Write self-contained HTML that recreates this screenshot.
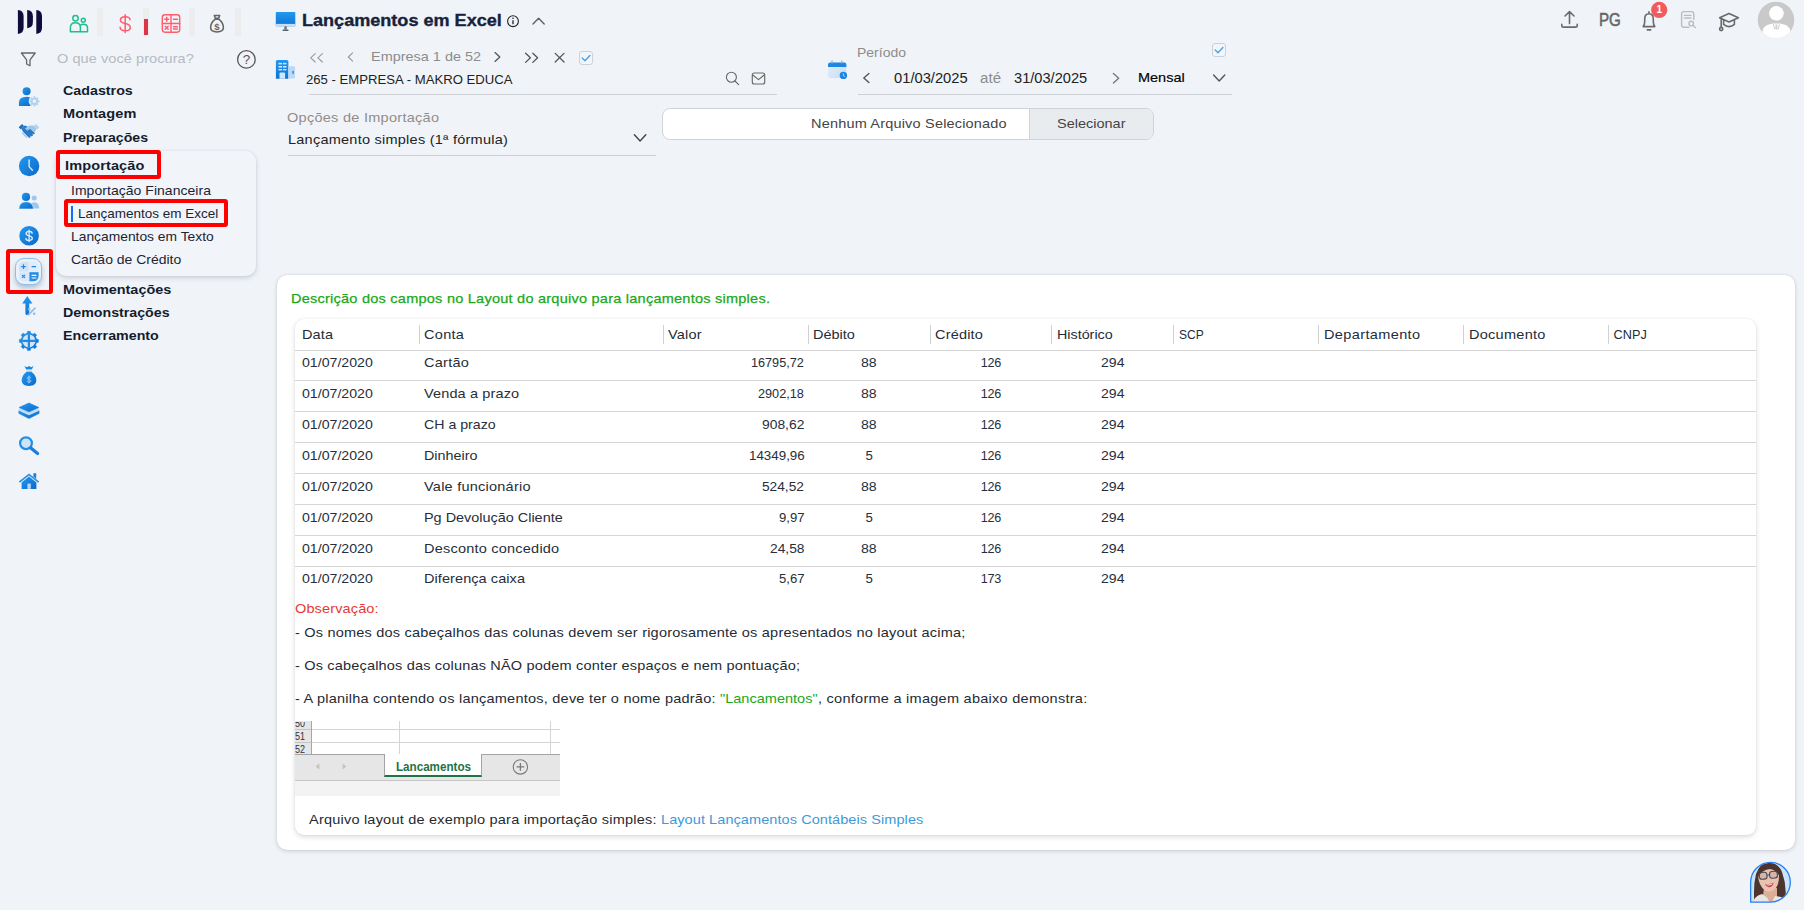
<!DOCTYPE html>
<html lang="pt-BR"><head><meta charset="utf-8"><title>Lançamentos em Excel</title>
<style>
html,body{margin:0;padding:0}
body{width:1804px;height:910px;overflow:hidden;position:relative;background:#f0f4f9;font-family:"Liberation Sans",sans-serif;}
.a{position:absolute;box-sizing:border-box}
.t{position:absolute;white-space:pre;line-height:1;font-family:"Liberation Sans",sans-serif;transform-origin:0 0}
svg{position:absolute;overflow:visible}
.gb{position:absolute;top:8px;width:6px;height:28px;background:#ededed}
.redbox{position:absolute;box-sizing:border-box;border:4px solid #ff0000;border-radius:3px}
.ul{position:absolute;height:1px;background:#cdd0d4}
.card{position:absolute;background:#fff}
.hsep{position:absolute;width:1px;top:325px;height:19px;background:#d0d0d0}
.rb{position:absolute;left:295px;width:1461px;height:1px;background:#d6d6d6}
.cb{position:absolute;box-sizing:border-box;width:14px;height:14px;border:1px solid #cdd0d4;border-radius:3px;background:#f2f5fa}

</style></head>
<body>
<svg width="0" height="0"><defs>
<linearGradient id="bg1" x1="0" y1="0" x2="1" y2="1"><stop offset="0" stop-color="#2399f0"/><stop offset="1" stop-color="#0b69c9"/></linearGradient>
<linearGradient id="bg2" x1="0" y1="0" x2="0" y2="1"><stop offset="0" stop-color="#2399f0"/><stop offset="1" stop-color="#0f72d2"/></linearGradient>
<linearGradient id="lg1" x1="0" y1="0" x2="1" y2="1"><stop offset="0" stop-color="#e6f0fb"/><stop offset="1" stop-color="#c3dcf5"/></linearGradient>
</defs></svg>

<!-- ======= top-left logo + module icons ======= -->
<svg class="a" style="left:0;top:0" width="260" height="45" viewBox="0 0 260 45">
  <path d="M17.9 10 Q23.599999999999998 10.5 23.599999999999998 16.2 V27.7 Q23.599999999999998 33.4 17.9 33.9 Z" fill="#0f0b3a"/>
  <path d="M27.2 10 Q32.9 10.5 32.9 16.2 V22.1 Q32.9 27.8 27.2 28.3 Z" fill="#0f0b3a"/>
  <path d="M36.3 10 Q42.0 10.5 42.0 16.2 V27.7 Q42.0 33.4 36.3 33.9 Z" fill="#0f0b3a"/>
  <!-- green people -->
  <g fill="none" stroke="#1dbf8a" stroke-width="1.5" stroke-linejoin="round">
    <circle cx="75.5" cy="18.2" r="2.7"/>
    <path d="M70.4 31.8 V27.6 Q70.4 22.7 75.5 22.7 Q80.4 22.7 80.4 27.6 V31.8 Z"/>
    <circle cx="83.3" cy="20.2" r="2"/>
    <path d="M80.2 25.3 Q81.4 24.3 83.3 24.3 Q87.5 24.3 87.5 28 V31.8 H80.4"/>
  </g>
  <!-- dollar -->
  <g fill="none" stroke="#ff5d6c" stroke-width="1.5" stroke-linecap="round">
    <path d="M125.2 14.8 V32.4"/>
    <path d="M130 19.8 C130 17.6 128.2 16.7 125.2 16.7 C122.1 16.7 120.4 17.9 120.4 20 C120.4 22.4 122.6 23 125.2 23.6 C128 24.2 130.3 25 130.3 27.4 C130.3 29.7 128.3 30.7 125.2 30.7 C122.1 30.7 120.1 29.7 120.1 27.3"/>
  </g>
  <!-- calc outline -->
  <g fill="none" stroke="#ff5d6c" stroke-width="1.4" stroke-linecap="round">
    <rect x="162.3" y="14.8" width="17.4" height="17.4" rx="2.6"/>
    <path d="M171 14.8 V32.2 M162.3 23.5 H179.7"/>
    <path d="M164.7 19.2 H168.7 M166.7 17.2 V21.2 M173.4 19.2 H177.4 M165.2 26.3 L168.2 29.3 M168.2 26.3 L165.2 29.3 M173.4 26.8 H177.4 M173.4 29 H177.4"/>
  </g>
  <!-- money bag outline -->
  <g fill="none" stroke="#666" stroke-width="1.55" stroke-linejoin="round" stroke-linecap="round">
    <path d="M214.3 15.4 H219.7 L218.6 18.3 H215.4 Z"/>
    <path d="M215.2 19.2 C212.6 21.4 210.6 24.6 210.6 27.6 C210.6 30.6 213 31.9 217 31.9 C221 31.9 223.4 30.6 223.4 27.6 C223.4 24.6 221.4 21.4 218.8 19.2 Z"/>
  </g>
</svg>
<span class="t" style="left:214.2px;top:21.6px;font-size:9.5px;font-weight:700;color:#666">$</span>
<div class="gb" style="left:97px"></div>
<div class="gb" style="left:143px"></div>
<div class="gb" style="left:189px"></div>
<div class="gb" style="left:235px"></div>
<div class="a" style="left:144px;top:19px;width:4px;height:16px;background:#dc3545"></div>

<!-- filter + help -->
<svg class="a" style="left:0;top:45px" width="260" height="30" viewBox="0 45 260 30">
  <path d="M21.4 53 H35.2 L30 59.8 V65.8 L26.6 64 V59.8 Z" fill="none" stroke="#666" stroke-width="1.3" stroke-linejoin="round"/>
  <circle cx="246.4" cy="59.4" r="8.8" fill="none" stroke="#555" stroke-width="1.3"/>
</svg>

<!-- ======= sidebar icons ======= -->
<svg class="a" style="left:0;top:80px" width="56" height="420" viewBox="0 80 56 420">
  <!-- user + gear -->
  <circle cx="26.6" cy="91.3" r="4" fill="url(#bg1)"/>
  <path d="M18.9 105.9 V103 Q18.9 96.8 26.6 96.8 Q31 96.8 33 99 L33 105.9 Z" fill="url(#bg1)"/>
  <circle cx="34.4" cy="101.3" r="5.7" fill="#f0f4f9"/>
  <path d="M33.62 97.68 L33.75 96.44 L35.05 96.44 L35.18 97.68 L36.41 98.19 L37.37 97.40 L38.30 98.33 L37.51 99.29 L38.02 100.52 L39.26 100.65 L39.26 101.95 L38.02 102.08 L37.51 103.31 L38.30 104.27 L37.37 105.20 L36.41 104.41 L35.18 104.92 L35.05 106.16 L33.75 106.16 L33.62 104.92 L32.39 104.41 L31.43 105.20 L30.50 104.27 L31.29 103.31 L30.78 102.08 L29.54 101.95 L29.54 100.65 L30.78 100.52 L31.29 99.29 L30.50 98.33 L31.43 97.40 L32.39 98.19 Z" fill="#b1d1ef" stroke="#b1d1ef" stroke-width="0.5" stroke-linejoin="round"/>
  <circle cx="34.4" cy="101.3" r="1.7" fill="#eef4fb"/>
  <!-- handshake -->
  <g transform="translate(29 131)">
    <path d="M-10.3 -3.7 L-7 -7 L-4.9 -4.9 L-8.2 -1.6 Z" fill="#1c6fc6"/>
    <path d="M10.3 -3.7 L7 -7 L4.9 -4.9 L8.2 -1.6 Z" fill="#b4d4f1"/>
    <path d="M7.6 -2.2 L4.3 -5.5 L0.4 -5.6 L-3.6 -2.4 L-2 -0.6 L1.4 -2.6 L5.6 1.4 Z" fill="#9cc7ee"/>
    <path d="M-7.6 -2.2 L-4.3 -5.5 L-1.2 -4.6 L-3.8 -2.4 L-2 -0.4 L1.3 -2.3 L6 2.2 L4.6 3.6 L3.4 2.6 L4 4.4 L2.6 5.6 L1.4 4.6 L1.6 6.2 L0.2 7 L-5.8 1 Z" fill="#2b7ac8"/>
    <path d="M-6.6 2 L-5.4 3.2 M-5 3.8 L-3.8 5 M-3.2 5.4 L-2.2 6.4" stroke="#9cc7ee" stroke-width="1.3" stroke-linecap="round"/>
  </g>
  <!-- clock -->
  <circle cx="29.1" cy="166" r="10.2" fill="url(#bg1)"/>
  <path d="M29.1 160 V166.6 L32.4 170.2" fill="none" stroke="#d6e9fb" stroke-width="1.4" stroke-linecap="round" stroke-linejoin="round"/>
  <!-- people -->
  <circle cx="34.2" cy="197.9" r="2.5" fill="#9cc8ee"/>
  <path d="M29.6 208.6 Q30.2 202.2 34.4 202.2 Q38.8 202.2 39.3 208.6 Z" fill="#9cc8ee"/>
  <circle cx="26" cy="196.9" r="4.1" fill="url(#bg1)"/>
  <path d="M18.8 209 Q19.3 201.7 26.1 201.7 Q32.9 201.7 33.5 209 Z" fill="url(#bg1)" stroke="#f0f4f9" stroke-width="0.6"/>
  <!-- dollar coin -->
  <circle cx="29.1" cy="235.7" r="9.8" fill="url(#bg1)"/>
  <g fill="none" stroke="#dcebfb" stroke-width="1.35" stroke-linecap="round">
    <path d="M29.1 230.2 V241.6"/>
    <path d="M32.1 233.3 C32.1 232 30.9 231.5 29.1 231.5 C27.3 231.5 26.1 232.3 26.1 233.6 C26.1 235.1 27.5 235.5 29.1 235.9 C30.8 236.3 32.3 236.8 32.3 238.3 C32.3 239.7 31 240.4 29.1 240.4 C27.2 240.4 25.9 239.7 25.9 238.4"/>
  </g>
  <!-- arrow + percent -->
  <path d="M27.3 296 L32.4 303.4 H29.2 V313.4 Q29.2 314.9 27.3 314.9 Q25.4 314.9 25.4 313.4 V303.4 H22.2 Z" fill="url(#bg2)"/>
  <g stroke="#8cc0ec" stroke-width="1.8" fill="none" stroke-linecap="round"><path d="M28.6 314.6 L35 308.2"/></g>
  <circle cx="29.2" cy="309.2" r="1.3" fill="#8cc0ec"/><circle cx="34.2" cy="313.8" r="1.3" fill="#8cc0ec"/>
  <!-- gear with cross -->
  <path d="M27.12 333.20 L27.46 331.31 L30.34 331.31 L30.68 333.20 L33.08 334.20 L34.66 333.10 L36.70 335.14 L35.60 336.72 L36.60 339.12 L38.49 339.46 L38.49 342.34 L36.60 342.68 L35.60 345.08 L36.70 346.66 L34.66 348.70 L33.08 347.60 L30.68 348.60 L30.34 350.49 L27.46 350.49 L27.12 348.60 L24.72 347.60 L23.14 348.70 L21.10 346.66 L22.20 345.08 L21.20 342.68 L19.31 342.34 L19.31 339.46 L21.20 339.12 L22.20 336.72 L21.10 335.14 L23.14 333.10 L24.72 334.20 Z" fill="url(#bg1)" stroke="#2290ea" stroke-width="0.5" stroke-linejoin="round"/>
  <circle cx="28.9" cy="340.9" r="6.5" fill="#d3e5f7"/>
  <path d="M27.8 334.4 H30 V339.8 H35.4 V342 H30 V347.4 H27.8 V342 H22.4 V339.8 H27.8 Z" fill="#2089e3"/>
  <!-- money bag -->
  <path d="M24.4 366 L26.9 367.3 L29 366 L31.1 367.3 L33.6 366 L31.8 369.4 H26.2 Z" fill="#1c86de"/>
  <path d="M26.2 369.5 H31.8 L31.7 370.4 H26.3 Z M26.3 371 H31.7 L31.8 371.9 H26.2 Z" fill="#a9cdee"/>
  <path d="M26.3 372 C23.4 374 21.7 377.2 21.7 380.2 C21.7 384 24.6 385.9 29 385.9 C33.4 385.9 36.3 384 36.3 380.2 C36.3 377.2 34.6 374 31.7 372 Z" fill="url(#bg1)"/>
  <g fill="none" stroke="#b9dbf8" stroke-width="0.8" stroke-linecap="round"><path d="M29 376 V383"/><path d="M30.7 377.9 C30.7 377.2 30 376.9 29 376.9 C28 376.9 27.3 377.4 27.3 378.1 C27.3 379 28.1 379.2 29 379.5 C30 379.8 30.8 380.1 30.8 381 C30.8 381.8 30.1 382.2 29 382.2 C27.9 382.2 27.2 381.8 27.2 381"/></g>
  <!-- layers -->
  <path d="M18.9 410.6 L29 415.1 L39.1 410.6 V413.4 L29 418.5 L18.9 413.4 Z" fill="url(#bg1)" stroke="#1a80dc" stroke-width="0.6" stroke-linejoin="round"/>
  <path d="M18.9 408.2 L29 412.6 L39.1 408.2 V410.8 L29 415.3 L18.9 410.8 Z" fill="#c3dcf4"/>
  <path d="M29 403 L38.9 407.5 L29 412 L19.1 407.5 Z" fill="url(#bg1)" stroke="#1f8ae6" stroke-width="0.7" stroke-linejoin="round"/>
  <!-- magnifier -->
  <circle cx="26" cy="443.2" r="5.9" fill="#cfe4f8" stroke="#1f8fe8" stroke-width="2.2"/>
  <path d="M30.8 448 L37.6 453.6" stroke="#1a7fdc" stroke-width="3.2" stroke-linecap="round"/>
  <!-- home -->
  <path d="M33.4 473.2 H36.2 V479 L33.4 476.6 Z" fill="#1f7fd4"/>
  <path d="M29 473.4 L39.2 481.6 L38.1 482.8 L29 475.6 L19.9 482.8 L18.8 481.6 Z" fill="#2b8fe0"/>
  <path d="M21.6 482.4 L29 476.6 L36.4 482.4 V488.9 H21.6 Z" fill="url(#bg1)"/>
  <rect x="27.4" y="483.6" width="3.4" height="5.3" fill="#b6d6f2"/>
</svg>

<!-- calc button + red box -->
<div class="a" style="left:15px;top:258px;width:27px;height:27px;border-radius:9px;background:#e9f1fb;border:1px solid #8fbfe9;box-shadow:0 3px 5px rgba(40,80,130,.32)"></div>
<svg class="a" style="left:15px;top:258px" width="27" height="27" viewBox="0 0 27 27">
  <clipPath id="cbc"><rect x="3.8" y="3.6" width="19.8" height="19.6" rx="5.2"/></clipPath>
  <g clip-path="url(#cbc)">
  <rect x="3.8" y="3.6" width="10" height="10" fill="#d0e3f6"/><rect x="14.4" y="3.6" width="10" height="10" fill="#dfecf9"/>
  <rect x="3.8" y="14.2" width="10" height="10" fill="#d9e8f8"/><rect x="14.4" y="14.2" width="10" height="10" fill="#2a8be2"/>
  </g>
  <g stroke="#1f86e2" stroke-width="1.1" fill="none"><path d="M6.2 8.6 H10.8 M8.5 6.3 V10.9 M16.6 8.6 H21 M7 16.9 L10 19.9 M10 16.9 L7 19.9"/></g>
  <path d="M16.6 17.4 H21.4 M16.6 20 H21.4" stroke="#fff" stroke-width="1.1"/>
</svg>
<div class="redbox" style="left:6.4px;top:249px;width:46.2px;height:44.8px"></div>

<!-- submenu panel -->
<div class="a" style="left:55.7px;top:150.5px;width:200.3px;height:125px;border-radius:10px;background:#f1f5fa;box-shadow:0 2px 5px rgba(50,58,72,.19),0 0 2px rgba(50,58,72,.10)"></div>
<div class="redbox" style="left:55.5px;top:150px;width:105.2px;height:28.8px"></div>
<div class="redbox" style="left:63.5px;top:199px;width:164.2px;height:27.7px"></div>
<div class="a" style="left:71px;top:206.2px;width:2.2px;height:15.6px;background:#0d6efd"></div>

<!-- ======= header ======= -->
<svg class="a" style="left:270px;top:0" width="330" height="100" viewBox="270 0 330 100">
  <!-- monitor -->
  <rect x="275.8" y="12" width="19.5" height="14.2" rx="0.8" fill="url(#bg2)"/>
  <rect x="275.8" y="23.9" width="19.5" height="2.4" fill="#c4def6"/>
  <path d="M284.5 26.3 H286.6 L287 29.6 H284.1 Z" fill="#6b7580"/>
  <rect x="282.6" y="29.6" width="5.9" height="1.3" rx="0.5" fill="#56616c"/>
  <!-- info -->
  <circle cx="513" cy="21.2" r="5.4" fill="none" stroke="#222" stroke-width="1.1"/>
  <path d="M513 20.2 V24.2" stroke="#222" stroke-width="1.3"/><circle cx="513" cy="18.3" r="0.8" fill="#222"/>
  <!-- chevron up -->
  <path d="M533 24 L538.6 18.3 L544.2 24" fill="none" stroke="#606060" stroke-width="1.4" stroke-linecap="round" stroke-linejoin="round"/>
  <!-- building -->
  <path d="M277.4 59.9 H286.8 Q288.4 59.9 288.4 61.5 V78.8 H275.9 V61.5 Q275.9 59.9 277.4 59.9 Z" fill="url(#bg2)"/>
  <path d="M288.4 66.2 H293.8 Q295 66.2 295 67.4 V77.4 Q295 78.6 293.8 78.6 H288.4 Z" fill="#bcd9f4"/>
  <rect x="292.3" y="70.8" width="1.7" height="3.2" rx="0.4" fill="#3d9be9"/>
  <g fill="#cfe5fa"><rect x="278.5" y="62.9" width="3.6" height="1.5"/><rect x="283" y="62.9" width="3.4" height="1.5"/>
  <rect x="278.5" y="66" width="3.6" height="1.6"/><rect x="283" y="66" width="3.4" height="1.6"/>
  <rect x="278.5" y="69" width="3.6" height="1.4"/><rect x="283" y="69" width="3.4" height="1.4"/></g>
  <path d="M279.5 78.8 V73.6 Q279.5 72.4 280.7 72.4 H283.9 Q285.1 72.4 285.1 73.6 V78.8 Z" fill="#d3e6f8"/>
  <!-- nav arrows -->
  <g fill="none" stroke="#999" stroke-width="1.1" stroke-linecap="round" stroke-linejoin="round">
    <path d="M315.2 53.6 L310.7 57.8 L315.2 62 M322.4 53.6 L317.9 57.8 L322.4 62"/>
    <path d="M352.6 52.8 L348.3 57 L352.6 61.2"/>
  </g>
  <g fill="none" stroke="#555" stroke-width="1.3" stroke-linecap="round" stroke-linejoin="round">
    <path d="M495 52.6 L499.8 57 L495 61.4"/>
    <path d="M525.6 53.2 L530.4 57.8 L525.6 62.4 M532.8 53.2 L537.6 57.8 L532.8 62.4"/>
    <path d="M555.2 53.4 L564 62 M564 53.4 L555.2 62"/>
  </g>
</svg>
<div class="cb" style="left:579.2px;top:51px"></div>
<svg class="a" style="left:579.2px;top:51px" width="14" height="14" viewBox="0 0 14 14"><path d="M3.2 7 L6 9.8 L10.9 4.6" fill="none" stroke="#4aa3ea" stroke-width="1.4" stroke-linecap="round" stroke-linejoin="round"/></svg>
<svg class="a" style="left:720px;top:68px" width="50" height="20" viewBox="720 68 50 20">
  <circle cx="731.4" cy="77.2" r="5" fill="none" stroke="#686868" stroke-width="1.15"/><path d="M735 81 L738.6 84.6" stroke="#686868" stroke-width="1.15" stroke-linecap="round"/>
  <rect x="752.3" y="73" width="12.4" height="11" rx="2" fill="none" stroke="#686868" stroke-width="1.15"/><path d="M752.8 75 L758.5 79.6 L764.2 75" fill="none" stroke="#686868" stroke-width="1.15" stroke-linejoin="round"/>
</svg>
<div class="ul" style="left:309px;top:94px;width:468px"></div>
<!-- dropdown -->
<svg class="a" style="left:630px;top:130px" width="20" height="16" viewBox="630 130 20 16"><path d="M634.4 134.8 L640.1 141 L645.8 134.8" fill="none" stroke="#444" stroke-width="1.4" stroke-linecap="round" stroke-linejoin="round"/></svg>
<div class="ul" style="left:288px;top:155px;width:368px"></div>
<!-- file input -->
<div class="a" style="left:662px;top:108px;width:492px;height:32px;border:1px solid #cfd4da;border-radius:8px;background:#fff;overflow:hidden">
  <div class="a" style="left:366px;top:0;width:125px;height:30px;background:#e9ecef;border-left:1px solid #cfd4da"></div>
</div>
<!-- period -->
<svg class="a" style="left:820px;top:40px" width="420" height="50" viewBox="820 40 420 50">
  <rect x="828" y="62.4" width="18.4" height="15.6" rx="2.4" fill="url(#lg1)"/>
  <path d="M830.4 62.4 H844 Q846.4 62.4 846.4 64.8 V67 H828 V64.8 Q828 62.4 830.4 62.4 Z" fill="#1f86e2"/>
  <rect x="831.4" y="60.3" width="1.3" height="3.2" rx="0.6" fill="#7db7ea"/><rect x="841.2" y="60.3" width="1.3" height="3.2" rx="0.6" fill="#7db7ea"/>
  <circle cx="843.4" cy="75.4" r="3.7" fill="#1c86e2"/>
  <path d="M843.4 73.4 V75.6 L844.8 76.6" stroke="#dcecfb" stroke-width="0.8" fill="none"/>
  <g fill="none" stroke="#555" stroke-width="1.4" stroke-linecap="round" stroke-linejoin="round">
    <path d="M868.9 73.6 L863.8 78.1 L868.9 82.6"/>
    <path d="M1113.4 73.5 L1118.7 78.2 L1113.4 82.9" stroke="#787878"/>
    <path d="M1213.6 75 L1219.2 81 L1224.8 75"/>
  </g>
</svg>
<div class="ul" style="left:858px;top:94px;width:374px"></div>
<div class="cb" style="left:1212px;top:43px"></div>
<svg class="a" style="left:1212px;top:43px" width="14" height="14" viewBox="0 0 14 14"><path d="M3.2 7 L6 9.8 L10.9 4.6" fill="none" stroke="#4aa3ea" stroke-width="1.4" stroke-linecap="round" stroke-linejoin="round"/></svg>

<!-- top-right icons -->
<svg class="a" style="left:1550px;top:0" width="254" height="45" viewBox="1550 0 254 45">
  <g fill="none" stroke="#6a6a6a" stroke-width="1.6" stroke-linecap="round" stroke-linejoin="round">
    <path d="M1569.5 12 V23.6 M1565 16 L1569.5 11.7 L1574 16 M1561.8 24.4 V25.4 Q1561.8 27.1 1563.5 27.1 H1575.5 Q1577.2 27.1 1577.2 25.4 V24.4"/>
    <path d="M1643.2 26.6 H1654.8 Q1653.3 24.6 1653.3 21.6 V19.2 Q1653.3 13.8 1649 13.8 Q1644.7 13.8 1644.7 19.2 V21.6 Q1644.7 24.6 1643.2 26.6 Z M1649 13.6 V11.8 M1647.3 29.9 H1650.7"/>
    <path d="M1729 13.6 L1738.4 17.8 L1729 22 L1719.6 17.8 Z M1723.6 20 V24.4 Q1726 26.6 1729 26.6 Q1732 26.6 1734.4 24.4 V20 M1721.2 18.6 V27.4"/>
    <circle cx="1721.2" cy="29" r="1.6"/>
  </g>
  <g fill="none" stroke="#bcbcbc" stroke-width="1.4" stroke-linecap="round" stroke-linejoin="round">
    <path d="M1689 27.3 H1683.8 Q1681.6 27.3 1681.6 25.1 V13.8 Q1681.6 11.6 1683.8 11.6 H1691.6 Q1693.8 11.6 1693.8 13.8 V19.4"/>
    <path d="M1684.4 15.4 H1691 M1684.4 18 H1691"/>
    <circle cx="1691.2" cy="23.6" r="2.3"/><path d="M1693 25.4 L1695.4 27.6"/>
  </g>
  <circle cx="1659.2" cy="9.9" r="8.1" fill="#f15b5b"/>
  <circle cx="1776" cy="20" r="18.3" fill="#c9c9c9"/>
  <clipPath id="avc"><circle cx="1776" cy="20" r="18.3"/></clipPath>
  <g clip-path="url(#avc)" fill="#fff"><circle cx="1776.4" cy="13.3" r="7.3"/><path d="M1762.6 40 V31.4 Q1762.6 25.6 1770.6 24 L1773.2 23.6 H1779.6 L1782.2 24 Q1790.2 25.6 1790.2 31.4 V40 Z"/><path d="M1773.4 24 L1774.6 29.4 M1779.4 24 L1778.2 29.4" stroke="#c9c9c9" stroke-width="0.9" fill="none"/><path d="M1775.6 24.2 H1777.2 L1777.6 28.6 L1776.4 30 L1775.2 28.6 Z" fill="#d4d4d4"/></g>
</svg>

<!-- ======= main card ======= -->
<div class="card" style="left:277px;top:275px;width:1518px;height:575px;border-radius:10px;box-shadow:0 1px 4px rgba(40,45,55,.20),0 0 1px rgba(40,45,55,.14)"></div>
<div class="card" style="left:295px;top:319px;width:1461px;height:516px;border-radius:9px;box-shadow:0 2px 5px rgba(40,45,55,.17),0 0 2px rgba(40,45,55,.09)"></div>
<div class="hsep" style="left:419px"></div><div class="hsep" style="left:663px"></div><div class="hsep" style="left:808px"></div>
<div class="hsep" style="left:930px"></div><div class="hsep" style="left:1051px"></div><div class="hsep" style="left:1173px"></div>
<div class="hsep" style="left:1318px"></div><div class="hsep" style="left:1463px"></div><div class="hsep" style="left:1608px"></div>
<div class="rb" style="top:350px"></div><div class="rb" style="top:380px"></div><div class="rb" style="top:411px"></div><div class="rb" style="top:442px"></div>
<div class="rb" style="top:473px"></div><div class="rb" style="top:504px"></div><div class="rb" style="top:535px"></div><div class="rb" style="top:566px"></div>

<!-- excel tab image -->
<div class="a" style="left:295px;top:721px;width:265px;height:75px;background:#fff;overflow:hidden">
  <div class="a" style="left:0;top:0;width:17px;height:33.5px;background:#e6e6e6;border-right:1px solid #a6a6a6"></div>
  <div class="a" style="left:17px;top:7.5px;width:248px;height:1px;background:#d4d4d4"></div>
  <div class="a" style="left:17px;top:20.8px;width:248px;height:1px;background:#d4d4d4"></div>
  <div class="a" style="left:0;top:7.5px;width:16px;height:1px;background:#c4c4c4"></div>
  <div class="a" style="left:0;top:20.8px;width:16px;height:1px;background:#c4c4c4"></div>
  <div class="a" style="left:104px;top:0;width:1px;height:33px;background:#d4d4d4"></div>
  <div class="a" style="left:255px;top:0;width:1px;height:33px;background:#d4d4d4"></div>
  <div class="a" style="left:0;top:33px;width:265px;height:27px;background:#e6e6e6;border-top:1px solid #a3a3a3;border-bottom:1px solid #c6c6c6"></div>
  <div class="a" style="left:89.4px;top:33px;width:97.4px;height:23px;background:#fff;border-left:1px solid #a3a3a3;border-right:1px solid #a3a3a3;border-bottom:2px solid #217346"></div>
  <div class="a" style="left:0;top:60px;width:265px;height:15px;background:#f3f3f3"></div>
  <svg class="a" style="left:0;top:0" width="265" height="75" viewBox="0 0 265 75">
    <path d="M24.4 42.6 V48.4 L20.6 45.5 Z M47.6 42.6 V48.4 L51.4 45.5 Z" fill="#c3c3c3"/>
    <circle cx="225.4" cy="45.9" r="7.2" fill="none" stroke="#7a7a7a" stroke-width="1.1"/><path d="M221.6 45.9 H229.2 M225.4 42.1 V49.7" stroke="#7a7a7a" stroke-width="1.3"/>
  </svg>
</div>

<!-- bottom-right assistant avatar -->
<svg class="a" style="left:1745px;top:858px" width="50" height="50" viewBox="1745 858 50 50">
  <clipPath id="asc"><path d="M1750.65 902.1 V882.3 A19.85 19.85 0 1 1 1770.5 902.1 Z"/></clipPath>
  <g clip-path="url(#asc)">
    <rect x="1745" y="858" width="50" height="50" fill="#c9e5fb"/>
    <path d="M1754.4 903 Q1753 886 1756 874 Q1760 862.6 1769 863 Q1778 862.6 1782 872 Q1786.4 884 1785.6 896 Q1784 901 1778 903 Z" fill="#4d342e"/>
    <path d="M1764 888 H1777 V903 H1762 Z" fill="#dcae97"/>
    <path d="M1758 875 Q1758 866 1768.4 865.6 Q1778.4 866 1779 876 Q1779 886 1774 890 Q1769.4 893 1765 890.4 Q1758.6 886 1758 875 Z" fill="#e8c3b0"/>
    <path d="M1757.4 878 Q1757.6 868 1762 865.4 Q1768 863.6 1774 865.4 Q1779.4 868 1779.6 876 Q1776 870 1770 869 Q1762 869.4 1757.4 878 Z" fill="#4d342e"/>
    <path d="M1753 903 Q1754 896 1762 894 L1767 897.6 L1770 903 Z M1771.4 903 L1775 896 L1781 897 Q1786 899 1787 903 Z" fill="#e9e5e3"/>
    <path d="M1765 884 Q1769.6 884.6 1773.6 882.8 Q1772.6 887.4 1768.8 887.2 Q1766 886.8 1765 884 Z" fill="#c8414e"/>
    <path d="M1766 884.3 Q1769.6 884.8 1772.8 883.5 Q1771.6 885.6 1768.9 885.6 Q1767 885.4 1766 884.3 Z" fill="#f6eeee"/>
    <g fill="rgba(120,120,135,.18)" stroke="#4a4a56" stroke-width="1.1"><rect x="1759.4" y="872.4" width="7.6" height="6.8" rx="2.6" transform="rotate(-4 1763 876)"/><rect x="1769.6" y="871.4" width="7.8" height="6.8" rx="2.6" transform="rotate(-4 1773 875)"/></g>
    <path d="M1767 875.2 L1769.6 874.8" stroke="#4a4a56" stroke-width="1"/>
  </g>
  <path d="M1750.65 902.1 V882.3 A19.85 19.85 0 1 1 1770.5 902.1 Z" fill="none" stroke="#2a7ff0" stroke-width="1.3"/>
</svg>

<div id="texts">
<span class="t" style="left:56.90px;top:52.20px;font-size:13.5px;color:#b4bac1;letter-spacing:0.065px;transform:scaleX(1.0750);">O que você procura?</span>
<span class="t" style="left:62.70px;top:84.10px;font-size:13.5px;color:#141c2e;font-weight:700;transform:scaleX(1.0571);">Cadastros</span>
<span class="t" style="left:62.70px;top:107.10px;font-size:13.5px;color:#141c2e;font-weight:700;letter-spacing:0.098px;transform:scaleX(1.0750);">Montagem</span>
<span class="t" style="left:62.70px;top:130.90px;font-size:13.5px;color:#141c2e;font-weight:700;transform:scaleX(1.0498);">Preparações</span>
<span class="t" style="left:64.50px;top:158.90px;font-size:13.5px;color:#141c2e;font-weight:700;letter-spacing:0.120px;transform:scaleX(1.0750);">Importação</span>
<span class="t" style="left:70.70px;top:183.90px;font-size:13px;color:#1c2434;letter-spacing:0.044px;transform:scaleX(1.0750);">Importação Financeira</span>
<span class="t" style="left:78.20px;top:206.80px;font-size:13px;color:#1c2434;transform:scaleX(1.0376);">Lançamentos em Excel</span>
<span class="t" style="left:70.70px;top:230.00px;font-size:13px;color:#1c2434;transform:scaleX(1.0636);">Lançamentos em Texto</span>
<span class="t" style="left:70.70px;top:252.90px;font-size:13px;color:#1c2434;transform:scaleX(1.0738);">Cartão de Crédito</span>
<span class="t" style="left:62.70px;top:282.60px;font-size:13.5px;color:#141c2e;font-weight:700;transform:scaleX(1.0691);">Movimentações</span>
<span class="t" style="left:62.70px;top:305.50px;font-size:13.5px;color:#141c2e;font-weight:700;transform:scaleX(1.0524);">Demonstrações</span>
<span class="t" style="left:62.70px;top:328.50px;font-size:13.5px;color:#141c2e;font-weight:700;transform:scaleX(1.0551);">Encerramento</span>
<span class="t" style="left:301.90px;top:12.30px;font-size:17px;color:#17223a;font-weight:700;transform:scaleX(1.0626);-webkit-text-stroke:0.35px #17223a;">Lançamentos em Excel</span>
<span class="t" style="left:370.60px;top:49.70px;font-size:13.5px;color:#8c8c8c;transform:scaleX(1.0709);">Empresa 1 de 52</span>
<span class="t" style="left:306.30px;top:72.70px;font-size:13.01px;color:#222;transform:scaleX(1.0100);">265 - EMPRESA - MAKRO EDUCA</span>
<span class="t" style="left:287.10px;top:111.20px;font-size:13.5px;color:#908c8a;letter-spacing:0.254px;transform:scaleX(1.0750);">Opções de Importação</span>
<span class="t" style="left:287.50px;top:132.90px;font-size:13.5px;color:#222;letter-spacing:0.221px;transform:scaleX(1.0750);">Lançamento simples (1ª fórmula)</span>
<span class="t" style="left:856.90px;top:45.60px;font-size:13.5px;color:#8c8c8c;transform:scaleX(1.0360);">Período</span>
<span class="t" style="left:894.30px;top:70.90px;font-size:14px;color:#222;transform:scaleX(1.0517);">01/03/2025</span>
<span class="t" style="left:980.10px;top:70.90px;font-size:14px;color:#8c8c8c;letter-spacing:0.080px;transform:scaleX(1.0750);">até</span>
<span class="t" style="left:1013.70px;top:70.90px;font-size:14px;color:#222;transform:scaleX(1.0445);">31/03/2025</span>
<span class="t" style="left:1138.40px;top:71.40px;font-size:13.5px;color:#000;transform:scaleX(1.0728);-webkit-text-stroke:0.15px #000;">Mensal</span>
<span class="t" style="left:810.50px;top:116.80px;font-size:13.5px;color:#444;letter-spacing:0.167px;transform:scaleX(1.0750);">Nenhum Arquivo Selecionado</span>
<span class="t" style="left:1057.40px;top:116.80px;font-size:13.5px;color:#444;transform:scaleX(1.0737);">Selecionar</span>
<span class="t" style="left:1599.00px;top:11.30px;font-size:18px;color:#666;transform-origin:0 0;transform:scaleX(0.84);-webkit-text-stroke:0.55px #666;">PG</span>
<span class="t" style="left:1656.42px;top:5.40px;font-size:10px;color:#fff;font-weight:700;">1</span>
<span class="t" style="left:242.64px;top:53.00px;font-size:13.5px;color:#555;">?</span>
<span class="t" style="left:291.30px;top:291.90px;font-size:13.5px;color:#19a819;letter-spacing:0.224px;transform:scaleX(1.0750);-webkit-text-stroke:0.25px #19a819;">Descrição dos campos no Layout do arquivo para lançamentos simples.</span>
<span class="t" style="left:301.60px;top:327.90px;font-size:13.5px;color:#232c39;letter-spacing:0.133px;transform:scaleX(1.0750);">Data</span>
<span class="t" style="left:424.30px;top:327.90px;font-size:13.5px;color:#232c39;letter-spacing:0.271px;transform:scaleX(1.0750);">Conta</span>
<span class="t" style="left:668.40px;top:327.90px;font-size:13.5px;color:#232c39;letter-spacing:0.162px;transform:scaleX(1.0750);">Valor</span>
<span class="t" style="left:813.00px;top:327.90px;font-size:13.5px;color:#232c39;transform:scaleX(1.0735);">Débito</span>
<span class="t" style="left:934.70px;top:327.90px;font-size:13.5px;color:#232c39;letter-spacing:0.171px;transform:scaleX(1.0750);">Crédito</span>
<span class="t" style="left:1056.90px;top:327.90px;font-size:13.5px;color:#232c39;transform:scaleX(1.0606);">Histórico</span>
<span class="t" style="left:1178.70px;top:328.90px;font-size:12.3px;color:#232c39;transform:scaleX(0.9764);">SCP</span>
<span class="t" style="left:1323.70px;top:327.90px;font-size:13.5px;color:#232c39;letter-spacing:0.348px;transform:scaleX(1.0750);">Departamento</span>
<span class="t" style="left:1468.70px;top:327.90px;font-size:13.5px;color:#232c39;letter-spacing:0.253px;transform:scaleX(1.0750);">Documento</span>
<span class="t" style="left:1613.60px;top:328.90px;font-size:12.7px;color:#232c39;">CNPJ</span>
<span class="t" style="left:301.70px;top:355.90px;font-size:13.5px;color:#262e3a;transform:scaleX(1.0477);">01/07/2020</span>
<span class="t" style="left:423.70px;top:355.90px;font-size:13.5px;color:#262e3a;letter-spacing:0.247px;transform:scaleX(1.0750);">Cartão</span>
<span class="t" style="left:751.40px;top:355.90px;font-size:13.2px;color:#262e3a;transform:scaleX(0.9597);">16795,72</span>
<span class="t" style="left:861.40px;top:355.90px;font-size:13.2px;color:#262e3a;transform:scaleX(1.0701);">88</span>
<span class="t" style="left:980.79px;top:356.90px;font-size:12.6px;color:#262e3a;letter-spacing:-0.300px;">126</span>
<span class="t" style="left:1101.10px;top:355.90px;font-size:13.2px;color:#262e3a;transform:scaleX(1.0674);">294</span>
<span class="t" style="left:301.70px;top:386.80px;font-size:13.5px;color:#262e3a;transform:scaleX(1.0477);">01/07/2020</span>
<span class="t" style="left:423.70px;top:386.80px;font-size:13.5px;color:#262e3a;letter-spacing:0.123px;transform:scaleX(1.0750);">Venda a prazo</span>
<span class="t" style="left:758.30px;top:386.80px;font-size:13.2px;color:#262e3a;transform:scaleX(0.9628);">2902,18</span>
<span class="t" style="left:861.40px;top:386.80px;font-size:13.2px;color:#262e3a;transform:scaleX(1.0701);">88</span>
<span class="t" style="left:980.79px;top:387.80px;font-size:12.6px;color:#262e3a;letter-spacing:-0.300px;">126</span>
<span class="t" style="left:1101.10px;top:386.80px;font-size:13.2px;color:#262e3a;transform:scaleX(1.0674);">294</span>
<span class="t" style="left:301.70px;top:417.60px;font-size:13.5px;color:#262e3a;transform:scaleX(1.0477);">01/07/2020</span>
<span class="t" style="left:423.70px;top:417.60px;font-size:13.5px;color:#262e3a;transform:scaleX(1.0486);">CH a prazo</span>
<span class="t" style="left:761.80px;top:417.60px;font-size:13.2px;color:#262e3a;transform:scaleX(1.0510);">908,62</span>
<span class="t" style="left:861.40px;top:417.60px;font-size:13.2px;color:#262e3a;transform:scaleX(1.0701);">88</span>
<span class="t" style="left:980.79px;top:418.60px;font-size:12.6px;color:#262e3a;letter-spacing:-0.300px;">126</span>
<span class="t" style="left:1101.10px;top:417.60px;font-size:13.2px;color:#262e3a;transform:scaleX(1.0674);">294</span>
<span class="t" style="left:301.70px;top:448.80px;font-size:13.5px;color:#262e3a;transform:scaleX(1.0477);">01/07/2020</span>
<span class="t" style="left:423.70px;top:448.80px;font-size:13.5px;color:#262e3a;transform:scaleX(1.0620);">Dinheiro</span>
<span class="t" style="left:748.50px;top:448.80px;font-size:13.2px;color:#262e3a;transform:scaleX(1.0124);">14349,96</span>
<span class="t" style="left:865.58px;top:448.80px;font-size:13.2px;color:#262e3a;">5</span>
<span class="t" style="left:980.79px;top:449.80px;font-size:12.6px;color:#262e3a;letter-spacing:-0.300px;">126</span>
<span class="t" style="left:1101.10px;top:448.80px;font-size:13.2px;color:#262e3a;transform:scaleX(1.0674);">294</span>
<span class="t" style="left:301.70px;top:480.00px;font-size:13.5px;color:#262e3a;transform:scaleX(1.0477);">01/07/2020</span>
<span class="t" style="left:423.70px;top:480.00px;font-size:13.5px;color:#262e3a;letter-spacing:0.217px;transform:scaleX(1.0750);">Vale funcionário</span>
<span class="t" style="left:762.30px;top:480.00px;font-size:13.2px;color:#262e3a;transform:scaleX(1.0386);">524,52</span>
<span class="t" style="left:861.40px;top:480.00px;font-size:13.2px;color:#262e3a;transform:scaleX(1.0701);">88</span>
<span class="t" style="left:980.79px;top:481.00px;font-size:12.6px;color:#262e3a;letter-spacing:-0.300px;">126</span>
<span class="t" style="left:1101.10px;top:480.00px;font-size:13.2px;color:#262e3a;transform:scaleX(1.0674);">294</span>
<span class="t" style="left:301.70px;top:510.80px;font-size:13.5px;color:#262e3a;transform:scaleX(1.0477);">01/07/2020</span>
<span class="t" style="left:423.70px;top:510.80px;font-size:13.5px;color:#262e3a;transform:scaleX(1.0683);">Pg Devolução Cliente</span>
<span class="t" style="left:778.70px;top:510.80px;font-size:13.2px;color:#262e3a;transform:scaleX(0.9933);">9,97</span>
<span class="t" style="left:865.58px;top:510.80px;font-size:13.2px;color:#262e3a;">5</span>
<span class="t" style="left:980.79px;top:511.80px;font-size:12.6px;color:#262e3a;letter-spacing:-0.300px;">126</span>
<span class="t" style="left:1101.10px;top:510.80px;font-size:13.2px;color:#262e3a;transform:scaleX(1.0674);">294</span>
<span class="t" style="left:301.70px;top:541.70px;font-size:13.5px;color:#262e3a;transform:scaleX(1.0477);">01/07/2020</span>
<span class="t" style="left:423.70px;top:541.70px;font-size:13.5px;color:#262e3a;letter-spacing:0.201px;transform:scaleX(1.0750);">Desconto concedido</span>
<span class="t" style="left:769.70px;top:541.70px;font-size:13.2px;color:#262e3a;transform:scaleX(1.0450);">24,58</span>
<span class="t" style="left:861.40px;top:541.70px;font-size:13.2px;color:#262e3a;transform:scaleX(1.0701);">88</span>
<span class="t" style="left:980.79px;top:542.70px;font-size:12.6px;color:#262e3a;letter-spacing:-0.300px;">126</span>
<span class="t" style="left:1101.10px;top:541.70px;font-size:13.2px;color:#262e3a;transform:scaleX(1.0674);">294</span>
<span class="t" style="left:301.70px;top:572.00px;font-size:13.5px;color:#262e3a;transform:scaleX(1.0477);">01/07/2020</span>
<span class="t" style="left:423.70px;top:572.00px;font-size:13.5px;color:#262e3a;letter-spacing:0.065px;transform:scaleX(1.0750);">Diferença caixa</span>
<span class="t" style="left:778.70px;top:572.00px;font-size:13.2px;color:#262e3a;transform:scaleX(0.9933);">5,67</span>
<span class="t" style="left:865.58px;top:572.00px;font-size:13.2px;color:#262e3a;">5</span>
<span class="t" style="left:980.79px;top:573.00px;font-size:12.6px;color:#262e3a;letter-spacing:-0.300px;">173</span>
<span class="t" style="left:1101.10px;top:572.00px;font-size:13.2px;color:#262e3a;transform:scaleX(1.0674);">294</span>
<span class="t" style="left:294.90px;top:601.90px;font-size:13.5px;color:#e53935;letter-spacing:0.122px;transform:scaleX(1.0750);">Observação:</span>
<span class="t" style="left:295.30px;top:626.30px;font-size:13.5px;color:#232a35;letter-spacing:0.193px;transform:scaleX(1.0750);">- Os nomes dos cabeçalhos das colunas devem ser rigorosamente os apresentados no layout acima;</span>
<span class="t" style="left:295.30px;top:659.30px;font-size:13.5px;color:#232a35;letter-spacing:0.165px;transform:scaleX(1.0750);">- Os cabeçalhos das colunas NÃO podem conter espaços e nem pontuação;</span>
<span class="t" style="left:295.30px;top:691.90px;font-size:13.5px;color:#232a35;letter-spacing:0.215px;transform:scaleX(1.0750);">- A planilha contendo os lançamentos, deve ter o nome padrão:</span>
<span class="t" style="left:720.20px;top:691.90px;font-size:13.5px;color:#19a819;letter-spacing:0.013px;transform:scaleX(1.0750);">"Lancamentos"</span>
<span class="t" style="left:818.20px;top:691.90px;font-size:13.5px;color:#232a35;letter-spacing:0.244px;transform:scaleX(1.0750);">, conforme a imagem abaixo demonstra:</span>
<span class="t" style="left:309.40px;top:812.90px;font-size:13.5px;color:#232a35;letter-spacing:0.196px;transform:scaleX(1.0750);">Arquivo layout de exemplo para importação simples:</span>
<span class="t" style="left:660.90px;top:812.90px;font-size:13.5px;color:#3d9ad9;letter-spacing:0.067px;transform:scaleX(1.0750);">Layout Lançamentos Contábeis Simples</span>
<span class="t" style="left:295.40px;top:717.70px;font-size:10.6px;color:#333;clip-path:inset(4.3px 0 0 0);transform-origin:0 0;transform:scaleX(.85);">50</span>
<span class="t" style="left:295.40px;top:730.90px;font-size:10.6px;color:#333;transform-origin:0 0;transform:scaleX(.85);">51</span>
<span class="t" style="left:295.40px;top:743.90px;font-size:10.6px;color:#333;transform-origin:0 0;transform:scaleX(.85);">52</span>
<span class="t" style="left:395.70px;top:760.60px;font-size:12px;color:#217346;font-weight:700;transform:scaleX(0.9695);">Lancamentos</span>
</div>
</body></html>
